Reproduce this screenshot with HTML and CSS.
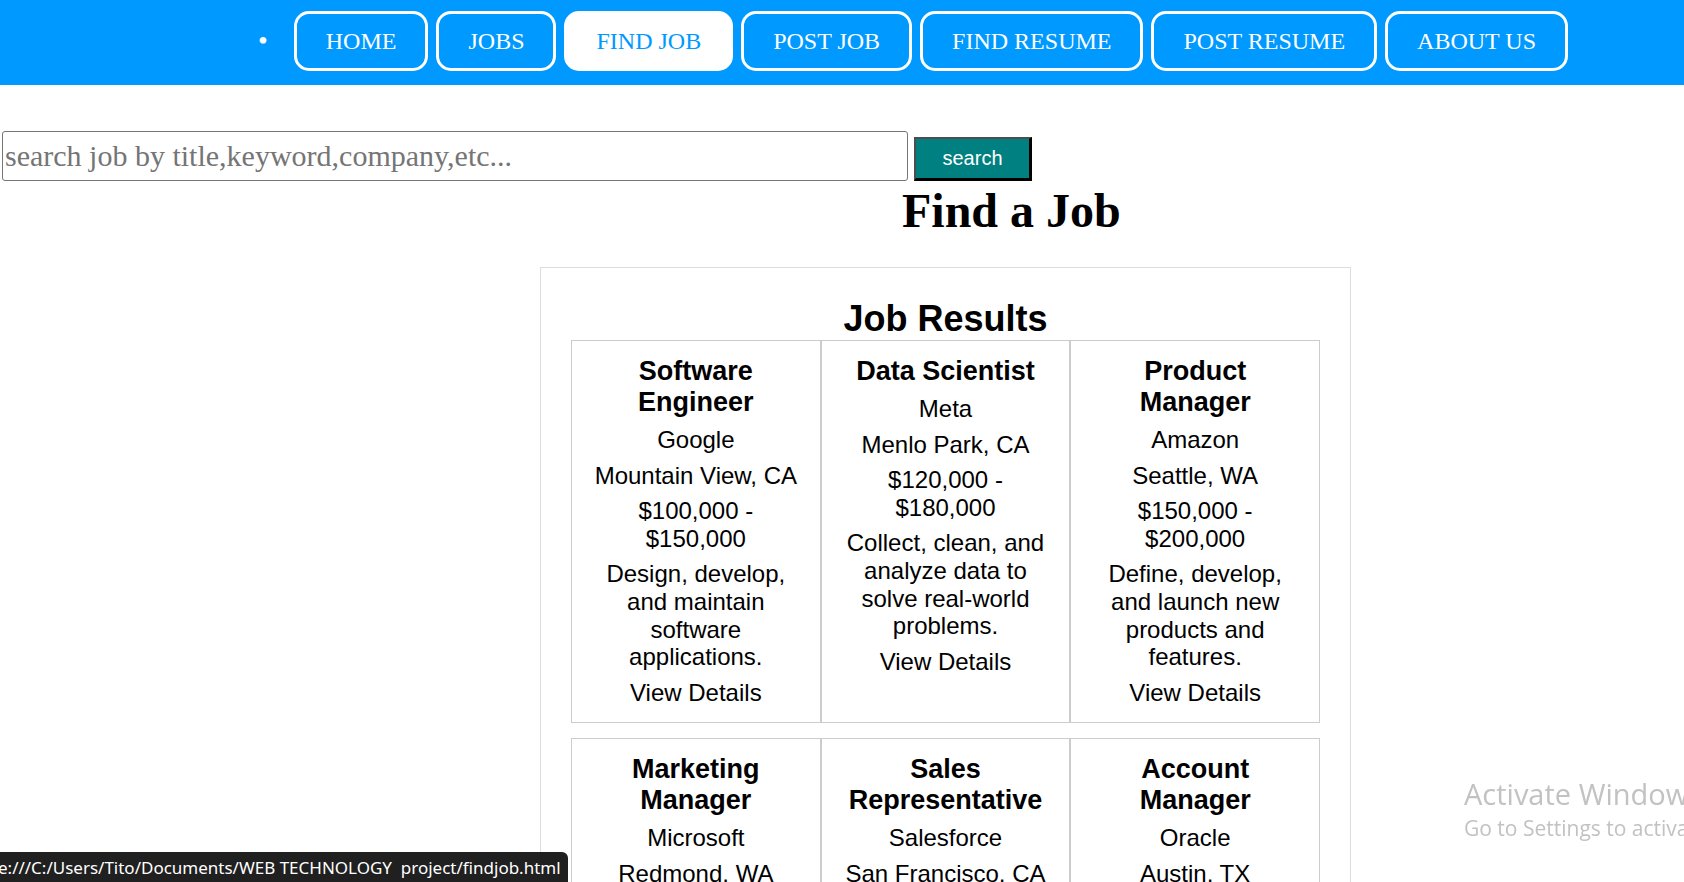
FILE: index.html
```html
<!DOCTYPE html>
<html lang="en">
<head>
<meta charset="utf-8">
<title>Find Job</title>
<link rel="stylesheet" href="styles.css">
</head>
<body>
<nav class="topnav">
  <span class="dot">•</span>
  <a class="navbtn" href="#">HOME</a>
  <a class="navbtn" href="#">JOBS</a>
  <a class="navbtn active" href="#">FIND JOB</a>
  <a class="navbtn" href="#">POST JOB</a>
  <a class="navbtn" href="#">FIND RESUME</a>
  <a class="navbtn" href="#">POST RESUME</a>
  <a class="navbtn" href="#">ABOUT US</a>
</nav>

<form class="searchrow">
  <input class="searchinput" type="text" placeholder="search job by title,keyword,company,etc...">
  <button class="searchbtn" type="button">search</button>
</form>

<h1 class="pagetitle">Find a Job</h1>

<section class="results">
  <h2 class="results-title">Job Results</h2>
  <div class="grid">
    <div class="card">
      <h3>Software Engineer</h3>
      <p>Google</p>
      <p>Mountain View, CA</p>
      <p>$100,000 - $150,000</p>
      <p>Design, develop, and maintain software applications.</p>
      <p><a class="details" href="#">View Details</a></p>
    </div>
    <div class="card">
      <h3>Data Scientist</h3>
      <p>Meta</p>
      <p>Menlo Park, CA</p>
      <p>$120,000 - $180,000</p>
      <p>Collect, clean, and analyze data to solve real-world problems.</p>
      <p><a class="details" href="#">View Details</a></p>
    </div>
    <div class="card">
      <h3>Product Manager</h3>
      <p>Amazon</p>
      <p>Seattle, WA</p>
      <p>$150,000 - $200,000</p>
      <p>Define, develop, and launch new products and features.</p>
      <p><a class="details" href="#">View Details</a></p>
    </div>
    <div class="card">
      <h3>Marketing Manager</h3>
      <p>Microsoft</p>
      <p>Redmond, WA</p>
      <p>$110,000 - $160,000</p>
      <p>Plan and execute marketing campaigns for new products.</p>
      <p><a class="details" href="#">View Details</a></p>
    </div>
    <div class="card">
      <h3>Sales Representative</h3>
      <p>Salesforce</p>
      <p>San Francisco, CA</p>
      <p>$80,000 - $120,000</p>
      <p>Build relationships with clients and close deals.</p>
      <p><a class="details" href="#">View Details</a></p>
    </div>
    <div class="card">
      <h3>Account Manager</h3>
      <p>Oracle</p>
      <p>Austin, TX</p>
      <p>$90,000 - $130,000</p>
      <p>Manage client accounts and grow long-term partnerships.</p>
      <p><a class="details" href="#">View Details</a></p>
    </div>
  </div>
</section>

<div class="watermark">
  <div class="wm-big">Activate Windows</div>
  <div class="wm-small">Go to Settings to activate Windows.</div>
</div>

<div class="statusbar"><span class="status-text">e:///C:/Users/Tito/Documents/WEB TECHNOLOGY&nbsp; project/findjob.html</span></div>
</body>
</html>
```

FILE: styles.css
```css
html {
  scrollbar-width: none;
}
html::-webkit-scrollbar {
  display: none;
}
body {
  margin: 0;
  background: #ffffff;
  font-family: "Liberation Serif", "Times New Roman", serif;
  color: #000;
}

.topnav {
  box-sizing: border-box;
  height: 85px;
  background: #0099ff;
  display: flex;
  align-items: flex-start;
  justify-content: flex-end;
  gap: 8px;
  padding: 11px 116px 0 0;
}
.dot {
  color: #fff;
  font-size: 28px;
  line-height: 60px;
  margin-right: 18px;
}
.navbtn {
  display: block;
  border: 3px solid #ffffff;
  border-radius: 15px;
  padding: 13px 29px;
  font-family: "Liberation Serif", "Times New Roman", serif;
  font-size: 24px;
  line-height: 28px;
  color: #ffffff;
  text-decoration: none;
}
.navbtn.active {
  background: #ffffff;
  color: #0099ff;
}

.searchrow {
  display: flex;
  align-items: flex-end;
  gap: 6px;
  margin: 46px 0 0 0;
  padding-left: 2px;
}
.searchinput {
  box-sizing: border-box;
  width: 906px;
  height: 50px;
  border: 1px solid #767676;
  border-radius: 3px;
  padding: 1px 2px;
  font-family: "Liberation Serif", "Times New Roman", serif;
  font-size: 30px;
  color: #000;
  margin: 0;
}
.searchinput::placeholder {
  color: #757575;
}
.searchbtn {
  box-sizing: border-box;
  width: 118px;
  height: 44px;
  margin: 0;
  background: #008080;
  color: #ffffff;
  font-family: "Liberation Sans", Arial, sans-serif;
  font-size: 20px;
  border-style: solid;
  border-width: 2px 3px 3px 2px;
  border-color: #4d4d4d #000000 #000000 #4d4d4d;
  padding: 0;
}

.pagetitle {
  margin: 2px 0 29px 902px;
  font-family: "Liberation Serif", "Times New Roman", serif;
  font-size: 48px;
  font-weight: bold;
  line-height: 55px;
}

.results {
  box-sizing: border-box;
  width: 811px;
  margin-left: 540px;
  border: 1px solid #dddddd;
  padding: 30px 30px 30px 30px;
  text-align: center;
  font-family: "Liberation Sans", Arial, sans-serif;
}
.results-title {
  margin: 0 0 1px 0;
  font-size: 36px;
  line-height: 41px;
  font-weight: bold;
}
.grid {
  display: grid;
  grid-template-columns: repeat(3, 1fr);
  row-gap: 15px;
}
.card {
  border: 1px solid #cccccc;
  padding: 7px 16px 8px 16px;
}
.card h3 {
  margin: 8px 0;
  font-size: 27px;
  line-height: 31px;
  font-weight: bold;
}
.card p {
  margin: 8px 0;
  font-size: 24px;
  line-height: 27.6px;
}
.details {
  color: #000;
  text-decoration: none;
}

.watermark {
  position: fixed;
  left: 1464px;
  top: 774px;
  color: #c2c2c2;
  font-family: "Open Sans", "Noto Sans", sans-serif;
  white-space: nowrap;
}
.wm-big {
  font-size: 29px;
  line-height: 40px;
}
.wm-small {
  font-size: 21px;
  line-height: 28px;
}

.statusbar {
  position: fixed;
  left: 0;
  bottom: 0;
  width: 568px;
  height: 30px;
  background: #202020;
  border-top-right-radius: 6px;
  overflow: hidden;
  display: flex;
  align-items: center;
}
.status-text {
  margin-left: -2px;
  color: #ffffff;
  font-family: "Noto Sans", "Open Sans", sans-serif;
  font-size: 17px;
  white-space: nowrap;
}
```
